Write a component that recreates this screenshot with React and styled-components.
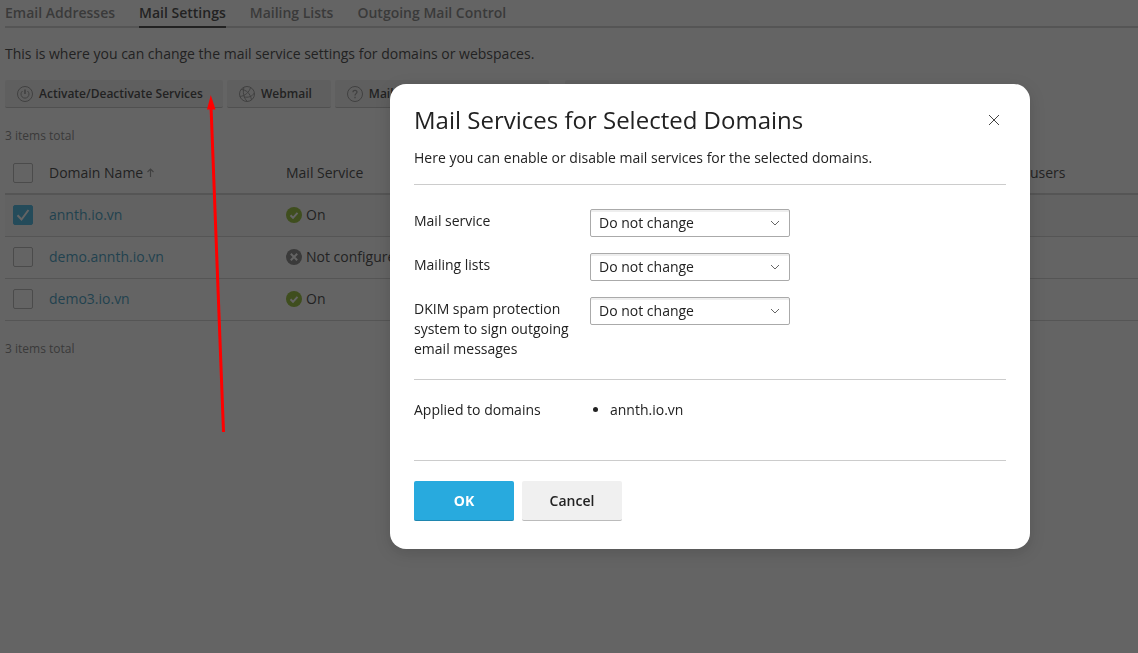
import React from 'react';
import styled, { createGlobalStyle, css } from 'styled-components';

const GlobalStyle = createGlobalStyle`
  *, *::before, *::after { box-sizing: border-box; }
  body {
    margin: 0;
    background: #fff;
    color: #222;
    font-family: "Open Sans", "Liberation Sans", sans-serif;
    font-size: 14px;
    line-height: 20px;
  }
  button, select, input { font: inherit; color: inherit; margin: 0; }
`;

const Page = styled.main`
  min-height: 100vh;
  padding: 3px 0 0 5px;
`;

const Tabs = styled.nav`
  display: flex;
  gap: 24px;
  border-bottom: 2px solid #ccc;
`;

const Tab = styled.a`
  padding-bottom: 3px;
  margin-bottom: -2px;
  border-bottom: 2px solid ${(p) => (p.$active ? '#222' : 'transparent')};
  color: ${(p) => (p.$active ? '#222' : '#737373')};
  font-weight: 600;
  text-decoration: none;
  white-space: nowrap;
`;

const Intro = styled.p`
  margin: 16px 0;
`;

const Toolbar = styled.div`
  display: flex;
  gap: 4px;
`;

const ToolGroup = styled.div`
  display: flex;
  gap: 4px;
  margin-right: 12px;
`;

const ToolButton = styled.button`
  display: flex;
  align-items: center;
  gap: 6px;
  height: 28px;
  min-width: ${(p) => p.$minWidth || 0}px;
  padding: 0 19px 0 12px;
  border: 0;
  border-bottom: 1px solid #bbb;
  border-radius: 2px;
  background: #eee;
  font-size: 12px;
  font-weight: 600;
  white-space: nowrap;
  svg { color: #888; flex: none; }
`;

const Total = styled.div`
  margin: ${(p) => (p.$bottom ? '18px 0 0' : '18px 0 6px')};
  color: #737373;
  font-size: 12px;
`;

const Table = styled.table`
  width: 100%;
  border-collapse: separate;
  border-spacing: 0;
  table-layout: fixed;
`;

const cell = css`
  height: 42px;
  padding: 0 8px;
  text-align: left;
  vertical-align: middle;
  font-weight: 400;
  white-space: nowrap;
`;

const HeadCell = styled.th`
  ${cell}
  height: 43px;
  width: ${(p) => p.$width || 'auto'};
  border-bottom: 2px solid #ccc;
`;

const Cell = styled.td`
  ${cell}
  padding-bottom: 1px;
  border-bottom: 1px solid #ccc;
`;

const Row = styled.tr`
  background: ${(p) => (p.$selected ? '#f7f7f7' : 'transparent')};
`;

const DomainLink = styled.a`
  color: #1c8db8;
  text-decoration: none;
`;

const Status = styled.span`
  display: flex;
  align-items: center;
  gap: 4px;
`;

const SortHeader = styled.span`
  display: flex;
  align-items: center;
  gap: 4px;
`;

const CheckWrap = styled.label`
  display: grid;
  width: 20px;
  height: 20px;
  > * { grid-area: 1 / 1; }
  svg { pointer-events: none; }
`;

const CheckInput = styled.input`
  appearance: none;
  width: 20px;
  height: 20px;
  border: 1px solid #aaa;
  border-radius: 2px;
  background: #fff;
  &:checked { background: #28aade; border-color: #28aade; }
  & + svg { visibility: hidden; }
  &:checked + svg { visibility: visible; }
`;

const Overlay = styled.div`
  position: fixed;
  inset: 0;
  display: flex;
  justify-content: flex-end;
  align-items: flex-start;
  padding: 84px 108px 0 0;
  background: rgba(34, 34, 34, 0.7);
`;

const Dialog = styled.section`
  width: 100%;
  max-width: 640px;
  padding: 20px 24px 28px;
  border-radius: 16px;
  background: #fff;
  box-shadow: 0 4px 16px rgba(0, 0, 0, 0.15);
`;

const DialogHeader = styled.header`
  display: flex;
  align-items: center;
  justify-content: space-between;
`;

const Title = styled.h1`
  margin: 0;
  font-size: 24px;
  line-height: 32px;
  font-weight: 400;
`;

const CloseButton = styled.button`
  display: grid;
  place-items: center;
  width: 24px;
  height: 24px;
  padding: 0;
  border: 0;
  background: none;
`;

const DialogIntro = styled.p`
  margin: 12px 0 16px;
`;

const Fields = styled.div`
  display: grid;
  gap: 16px;
  padding: 24px 0 20px;
  border-top: 1px solid #ccc;
`;

const Field = styled.div`
  display: grid;
  grid-template-columns: 160px 1fr;
  column-gap: 16px;
  align-items: start;
`;

const FieldLabel = styled.label`
  padding-top: 2px;
`;

const SelectWrap = styled.div`
  display: grid;
  width: 200px;
  align-items: center;
  > * { grid-area: 1 / 1; }
  svg { justify-self: end; margin-right: 10px; pointer-events: none; }
`;

const Select = styled.select`
  appearance: none;
  width: 100%;
  height: 28px;
  padding: 0 28px 0 8px;
  border: 1px solid #aaa;
  border-radius: 2px;
  background: #fff;
  box-shadow: inset 0 2px 0 #eee;
`;

const Applied = styled(Field)`
  padding: 20px 0 40px;
  border-top: 1px solid #ccc;
`;

const DomainList = styled.ul`
  margin: 0;
  padding-left: 20px;
`;

const Actions = styled.footer`
  display: flex;
  gap: 8px;
  padding-top: 20px;
  border-top: 1px solid #ccc;
`;

const ActionButton = styled.button`
  width: 100px;
  height: 40px;
  padding: 0;
  border: 0;
  border-bottom: 1px solid ${(p) => (p.$primary ? '#1f86af' : '#bbb')};
  border-radius: 2px;
  background: ${(p) => (p.$primary ? '#28aade' : '#f0f0f0')};
  color: ${(p) => (p.$primary ? '#fff' : '#222')};
  font-weight: ${(p) => (p.$primary ? 700 : 600)};
`;

const Pointer = styled.svg`
  position: fixed;
  top: 94px;
  left: 204px;
  pointer-events: none;
`;

const PowerIcon = () => (
  <svg width="16" height="16" viewBox="0 0 16 16" fill="none" stroke="currentColor" aria-hidden="true">
    <circle cx="8" cy="8" r="7.5" />
    <path d="M5.500 5a4 4 0 1 0 5 0" />
    <path d="M8 3.500v4.500" strokeWidth="1.600" />
  </svg>
);

const GlobeIcon = () => (
  <svg width="16" height="16" viewBox="0 0 16 16" fill="none" stroke="currentColor" aria-hidden="true">
    <circle cx="8" cy="8" r="7.5" />
    <path d="M2 3.500C7 3.500 11.500 7.500 12.500 14" />
    <path d="M11.500 1.500C10.500 6 6 10 0.800 10.500" />
    <path d="M5 1.500C3.500 6 4.500 11.500 8 15.200" />
    <path d="M4.800 10.800C9 12 13.500 10.500 15.200 7" />
  </svg>
);

const HelpIcon = () => (
  <svg width="16" height="16" viewBox="0 0 16 16" fill="none" stroke="currentColor" aria-hidden="true">
    <circle cx="8" cy="8" r="7.5" />
    <path d="M6 6.200C6 3.600 10 3.800 10 6.100C10 7.600 8 7.700 8 9.500M8 10.800v1.500" strokeWidth="1.300" />
  </svg>
);

const OnIcon = () => (
  <svg width="16" height="16" viewBox="0 0 16 16" fill="none" aria-hidden="true">
    <circle cx="8" cy="8" r="8" fill="#82b414" />
    <path d="M4.500 8.300l2.500 2.500 4.500-5" stroke="#fff" strokeWidth="2" />
  </svg>
);

const OffIcon = () => (
  <svg width="16" height="16" viewBox="0 0 16 16" fill="none" aria-hidden="true">
    <circle cx="8" cy="8" r="8" fill="#737373" />
    <path d="M4.800 4.800l6.400 6.400M11.200 4.800l-6.400 6.400" stroke="#fff" strokeWidth="2" />
  </svg>
);

const SortIcon = () => (
  <svg width="7" height="9" viewBox="0 0 7 9" fill="none" stroke="#888" aria-hidden="true">
    <path d="M3.500 9V1M0.500 4l3-3 3 3" strokeWidth="1.200" />
  </svg>
);

const ChevronIcon = () => (
  <svg width="10" height="6" viewBox="0 0 10 6" fill="none" stroke="#666" aria-hidden="true">
    <path d="M1 1l4 4 4-4" />
  </svg>
);

const CloseIcon = () => (
  <svg width="12" height="12" viewBox="0 0 12 12" fill="none" stroke="#444" aria-hidden="true">
    <path d="M1 1l10 10M11 1L1 11" />
  </svg>
);

function Checkbox({ label, checked }) {
  return (
    <CheckWrap>
      <CheckInput type="checkbox" aria-label={label} defaultChecked={checked} />
      <svg width="20" height="20" viewBox="0 0 20 20" fill="none" aria-hidden="true">
        <path d="M4.500 10.200l4 4.300 7-9.500" stroke="#fff" strokeWidth="2" />
      </svg>
    </CheckWrap>
  );
}

const tabs = ['Email Addresses', 'Mail Settings', 'Mailing Lists', 'Outgoing Mail Control'];

const domains = [
  { name: 'annth.io.vn', on: true, selected: true },
  { name: 'demo.annth.io.vn', on: false },
  { name: 'demo3.io.vn', on: true },
];

const fields = [
  { id: 'mail-service', label: 'Mail service' },
  { id: 'mailing-lists', label: 'Mailing lists' },
  { id: 'dkim', label: 'DKIM spam protection system to sign outgoing email messages' },
];

export default function App() {
  return (
    <>
      <GlobalStyle />
      <Page>
        <Tabs>
          {tabs.map((t) => (
            <Tab key={t} href="#" $active={t === 'Mail Settings'}>{t}</Tab>
          ))}
        </Tabs>
        <Intro>This is where you can change the mail service settings for domains or webspaces.</Intro>
        <Toolbar>
          <ToolGroup>
            <ToolButton $minWidth={218}><PowerIcon />Activate/Deactivate Services</ToolButton>
            <ToolButton><GlobeIcon />Webmail</ToolButton>
            <ToolButton $minWidth={214}><HelpIcon />Mail</ToolButton>
          </ToolGroup>
          <ToolButton $minWidth={185} aria-label="More actions" />
        </Toolbar>
        <Total>3 items total</Total>
        <Table>
          <thead>
            <tr>
              <HeadCell $width="36px"><Checkbox label="Select all" /></HeadCell>
              <HeadCell $width="237px"><SortHeader>Domain Name<SortIcon /></SortHeader></HeadCell>
              <HeadCell>Mail Service</HeadCell>
              <HeadCell $width="116px">users</HeadCell>
            </tr>
          </thead>
          <tbody>
            {domains.map((d) => (
              <Row key={d.name} $selected={d.selected}>
                <Cell><Checkbox label={d.name} checked={d.selected} /></Cell>
                <Cell><DomainLink href="#">{d.name}</DomainLink></Cell>
                <Cell>
                  <Status>{d.on ? <OnIcon /> : <OffIcon />}{d.on ? 'On' : 'Not configured'}</Status>
                </Cell>
                <Cell />
              </Row>
            ))}
          </tbody>
        </Table>
        <Total $bottom>3 items total</Total>
      </Page>
      <Overlay>
        <Dialog role="dialog" aria-modal="true" aria-labelledby="dialog-title">
          <DialogHeader>
            <Title id="dialog-title">Mail Services for Selected Domains</Title>
            <CloseButton aria-label="Close"><CloseIcon /></CloseButton>
          </DialogHeader>
          <DialogIntro>Here you can enable or disable mail services for the selected domains.</DialogIntro>
          <Fields>
            {fields.map((f) => (
              <Field key={f.id}>
                <FieldLabel htmlFor={f.id}>{f.label}</FieldLabel>
                <SelectWrap>
                  <Select id={f.id}><option>Do not change</option></Select>
                  <ChevronIcon />
                </SelectWrap>
              </Field>
            ))}
          </Fields>
          <Applied>
            <span>Applied to domains</span>
            <DomainList><li>annth.io.vn</li></DomainList>
          </Applied>
          <Actions>
            <ActionButton $primary>OK</ActionButton>
            <ActionButton>Cancel</ActionButton>
          </Actions>
        </Dialog>
      </Overlay>
      <Pointer width="24" height="340" viewBox="0 0 24 340" aria-hidden="true">
        <path d="M7 12L19.500 338" stroke="#f00" strokeWidth="3" />
        <path d="M6.800 1L11.500 15.500L3 15.500z" fill="#f00" />
      </Pointer>
    </>
  );
}
